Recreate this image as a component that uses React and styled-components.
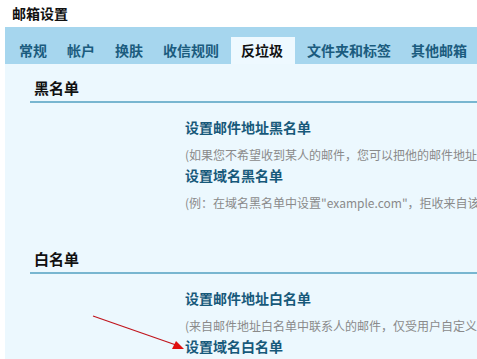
import React from "react";
import styled, { createGlobalStyle } from "styled-components";

const GlobalStyle = createGlobalStyle`
  html, body {
    margin: 0;
    padding: 0;
    background: #ffffff;
    overflow: hidden;
  }
  body {
    font-family: "Noto Sans CJK SC", "DejaVu Sans", sans-serif;
  }
`;

const tabs = ["常规", "帐户", "换肤", "收信规则", "反垃圾", "文件夹和标签", "其他邮箱"];

const sections = [
  {
    title: "黑名单",
    items: [
      {
        link: "设置邮件地址黑名单",
        desc: "(如果您不希望收到某人的邮件，您可以把他的邮件地址添加到黑名单中)",
      },
      {
        link: "设置域名黑名单",
        desc: "(例：在域名黑名单中设置\"example.com\"，拒收来自该域名的邮件)",
      },
    ],
  },
  {
    title: "白名单",
    items: [
      {
        link: "设置邮件地址白名单",
        desc: "(来自邮件地址白名单中联系人的邮件，仅受用户自定义规则的影响)",
      },
      { link: "设置域名白名单" },
    ],
  },
];

const App = () => {
  return (
    <Page>
      <GlobalStyle />
      <Title>邮箱设置</Title>
      <TabBar>
        {tabs.map((t) => (
          <Tab key={t} $active={t === "反垃圾"}>
            {t}
          </Tab>
        ))}
      </TabBar>
      <Content>
        {sections.map((s, i) => (
          <Section key={s.title} $first={i === 0}>
            <SectionTitle>{s.title}</SectionTitle>
            <ItemList>
              {s.items.map((it) => (
                <Item key={it.link}>
                  <ItemLink>{it.link}</ItemLink>
                  {it.desc && <ItemDesc>{it.desc}</ItemDesc>}
                </Item>
              ))}
            </ItemList>
          </Section>
        ))}
      </Content>
      {/* red annotation arrow drawn over the page */}
      <Arrow width="100" height="40" viewBox="0 0 100 40">
        <line x1="1" y1="2" x2="84" y2="31" stroke="#c0141c" strokeWidth="1.2" />
        <polygon points="92,35 80,35 84,27" fill="#e01010" />
      </Arrow>
    </Page>
  );
};

export default App;

const Page = styled.div`
  position: relative;
  width: 477px;
  height: 359px;
  overflow: hidden;
`;

const Title = styled.div`
  height: 27px;
  line-height: 27px;
  padding-left: 12px;
  font-size: 14px;
  font-weight: 700;
  color: #111;
`;

const TabBar = styled.div`
  display: flex;
  align-items: flex-end;
  margin-left: 5px;
  height: 37px;
  padding-left: 4px;
  background: #a6d6ee;
  white-space: nowrap;
`;

const Tab = styled.div`
  flex: none;
  height: 27px;
  line-height: 27px;
  padding: 0 ${(p) => (p.$active ? "12px" : "10px")} 0 10px;
  margin: 0 ${(p) => (p.$active ? "2px" : "0")} 0 ${(p) => (p.$active ? "2px" : "0")};
  font-size: 14px;
  font-weight: 700;
  color: ${(p) => (p.$active ? "#111" : "#1b5c7e")};
  background: ${(p) => (p.$active ? "#eef9ff" : "transparent")};
`;

const Content = styled.div`
  margin-left: 5px;
  height: 295px;
  padding: 12px 0 0 25px;
  background: #ecf8fe;
  box-sizing: border-box;
`;

const Section = styled.div`
  margin-top: ${(p) => (p.$first ? "0" : "34px")};
`;

const SectionTitle = styled.div`
  line-height: 24px;
  padding: 0 0 1px 4px;
  border-bottom: 2px solid #78b6d0;
  font-size: 15px;
  font-weight: 700;
  color: #111;
`;

const ItemList = styled.div`
  padding: 14px 0 0 155px;
  white-space: nowrap;
`;

const Item = styled.div`
  display: flex;
  flex-direction: column;
`;

const ItemLink = styled.div`
  line-height: 20px;
  font-size: 14px;
  font-weight: 700;
  color: #17597a;
`;

const ItemDesc = styled.div`
  margin-top: 8px;
  line-height: 20px;
  font-size: 12px;
  color: #8a8a8a;
`;

const Arrow = styled.svg`
  position: absolute;
  left: 92px;
  top: 314px;
`;
